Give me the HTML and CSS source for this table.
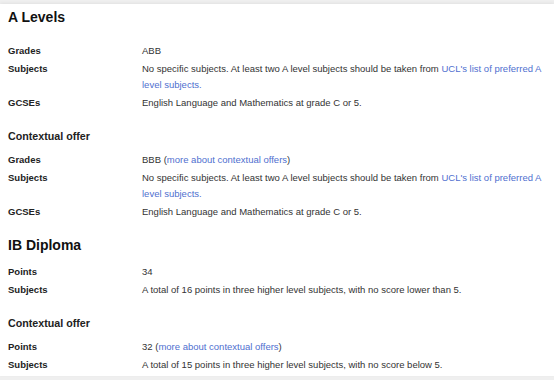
FILE: index.html
```html
<!DOCTYPE html>
<html lang="en">
<head>
<meta charset="utf-8">
<title>Entry requirements</title>
<link rel="stylesheet" href="styles.css">
</head>
<body>
<div class="card">
  <section class="qual qual-first">
    <h2 class="qual-title">A Levels</h2>
    <dl class="reqs">
      <dt>Grades</dt><dd>ABB</dd>
      <dt>Subjects</dt><dd>No specific subjects. At least two A level subjects should be taken from <a href="#">UCL's list of preferred A level subjects.</a></dd>
      <dt>GCSEs</dt><dd>English Language and Mathematics at grade C or 5.</dd>
    </dl>
    <h3 class="sub-title">Contextual offer</h3>
    <dl class="reqs">
      <dt>Grades</dt><dd>BBB (<a href="#">more about contextual offers</a>)</dd>
      <dt>Subjects</dt><dd>No specific subjects. At least two A level subjects should be taken from <a href="#">UCL's list of preferred A level subjects.</a></dd>
      <dt>GCSEs</dt><dd>English Language and Mathematics at grade C or 5.</dd>
    </dl>
  </section>
  <section class="qual">
    <h2 class="qual-title">IB Diploma</h2>
    <dl class="reqs">
      <dt>Points</dt><dd>34</dd>
      <dt>Subjects</dt><dd>A total of 16 points in three higher level subjects, with no score lower than 5.</dd>
    </dl>
    <h3 class="sub-title">Contextual offer</h3>
    <dl class="reqs">
      <dt>Points</dt><dd>32 (<a href="#">more about contextual offers</a>)</dd>
      <dt>Subjects</dt><dd>A total of 15 points in three higher level subjects, with no score below 5.</dd>
    </dl>
  </section>
</div>
</body>
</html>
```

FILE: styles.css
```css
html, body {
  margin: 0;
  padding: 0;
}
body {
  background: #efefef;
  font-family: "Liberation Sans", Arial, sans-serif;
  color: #333;
  padding-top: 4px;
  height: 380px;
  box-sizing: border-box;
  overflow: hidden;
}
.card {
  background: #fff;
  height: 372px;
  padding: 4px 8px 0 8px;
  box-sizing: border-box;
  box-shadow: 0 -1px 3px rgba(0, 0, 0, 0.06);
}
.qual {
  margin-bottom: 16px;
}
.qual-title {
  margin: 0 0 10px 0;
  font-size: 14px;
  line-height: 18px;
  font-weight: bold;
  color: #111;
}
.qual-first .qual-title {
  margin-bottom: 17px;
}
.sub-title {
  margin: 18px 0 9px 0;
  font-size: 10.7px;
  line-height: 14px;
  font-weight: bold;
  color: #222;
}
.reqs {
  margin: 0;
  display: grid;
  grid-template-columns: 134px 1fr;
  row-gap: 2px;
  font-size: 9.5px;
  line-height: 16px;
}
.reqs dt {
  font-weight: bold;
  color: #222;
}
.reqs dd {
  margin: 0;
  color: #333;
}
.reqs a {
  color: #4f6fcf;
  text-decoration: none;
}
```
